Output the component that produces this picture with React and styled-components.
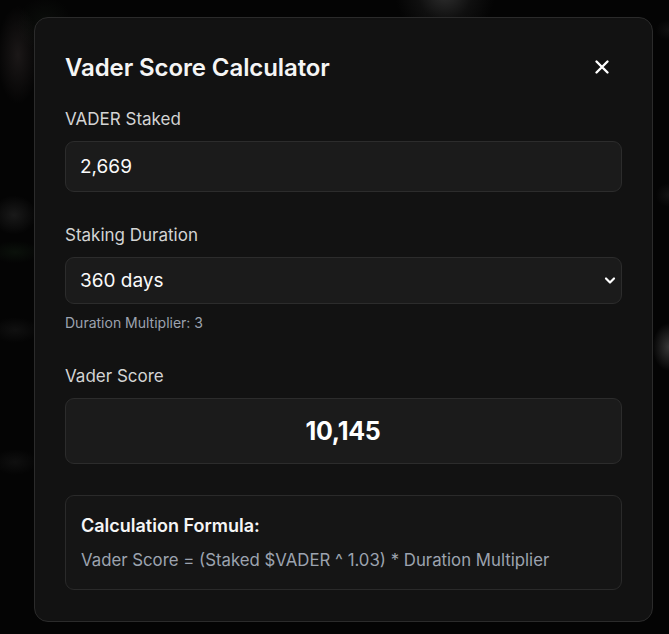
import React, { useState } from "react";
import styled, { createGlobalStyle } from "styled-components";

const GlobalStyle = createGlobalStyle`
  html, body {
    margin: 0;
    padding: 0;
    background: #030303;
    font-family: Inter, "Noto Sans", "Liberation Sans", sans-serif;
  }
  * { box-sizing: border-box; }
`;

const Backdrop = styled.div`
  width: 669px;
  height: 634px;
  overflow: hidden;
  background:
    radial-gradient(circle at 445px -8px, rgba(90, 90, 90, 0.5) 0, rgba(60, 60, 60, 0.2) 28px, transparent 50px),
    radial-gradient(ellipse 30px 70px at 18px 55px, rgba(70, 60, 60, 0.35), transparent 70%),
    radial-gradient(ellipse 40px 40px at 45px 25px, rgba(40, 55, 40, 0.2), transparent 70%),
    radial-gradient(ellipse 30px 26px at 14px 215px, rgba(75, 75, 75, 0.3), transparent 75%),
    radial-gradient(ellipse 32px 14px at 15px 252px, rgba(30, 55, 30, 0.25), transparent 80%),
    radial-gradient(ellipse 30px 16px at 15px 330px, rgba(60, 60, 60, 0.22), transparent 80%),
    radial-gradient(ellipse 28px 16px at 15px 462px, rgba(55, 55, 55, 0.22), transparent 80%),
    radial-gradient(ellipse 22px 32px at 669px 347px, rgba(95, 95, 95, 0.55), transparent 75%),
    radial-gradient(ellipse 18px 16px at 669px 195px, rgba(60, 60, 60, 0.25), transparent 75%),
    radial-gradient(ellipse 18px 14px at 669px 30px, rgba(50, 50, 50, 0.25), transparent 75%),
    #040404;
  display: flex;
  justify-content: flex-start;
  padding: 17px 0 0 34px;
`;

const Modal = styled.div`
  width: 619px;
  height: 605px;
  background: #121212;
  border: 1px solid #2b2b2b;
  border-radius: 14px;
  padding: 30px 30px 0 30px;
  display: flex;
  flex-direction: column;
`;

const Header = styled.div`
  display: flex;
  align-items: center;
  justify-content: space-between;
  height: 38px;
`;

const Title = styled.h2`
  margin: 0;
  font-size: 24px;
  font-weight: 600;
  color: #f5f5f5;
  letter-spacing: -0.1px;
`;

const CloseButton = styled.button`
  background: none;
  border: none;
  padding: 0;
  width: 22px;
  height: 22px;
  display: flex;
  align-items: center;
  justify-content: center;
  margin-right: 9px;
  cursor: pointer;
`;

const Field = styled.div`
  display: flex;
  flex-direction: column;
  margin-top: ${p => p.$top}px;
`;

const Label = styled.label`
  font-size: 17px;
  color: #d4d4d4;
  line-height: 20px;
  margin-bottom: 12px;
`;

const Box = styled.div`
  height: ${p => p.$h}px;
  background: #1b1b1b;
  border: 1px solid #2c2c2c;
  border-radius: 9px;
  display: flex;
  align-items: center;
  padding: 0 ${p => p.$pr ?? 15}px 0 14px;
  color: #fafafa;
  font-size: 19px;
  justify-content: ${p => (p.$center ? "center" : "space-between")};
`;

const Input = styled.input`
  background: transparent;
  border: none;
  outline: none;
  color: #fafafa;
  font-family: inherit;
  font-size: 19px;
  width: 100%;
  padding: 0;
`;

const Hint = styled.div`
  font-size: 14px;
  color: #9ca3af;
  margin-top: 10px;
`;

const Score = styled.div`
  font-size: 25px;
  font-weight: 700;
  color: #ffffff;
  letter-spacing: -0.3px;
`;

const FormulaCard = styled.div`
  margin-top: 31px;
  height: 95px;
  background: #151515;
  border: 1px solid #2a2a2a;
  border-radius: 9px;
  padding: 18px 16px 0 15px;
`;

const FormulaTitle = styled.div`
  font-size: 18px;
  font-weight: 600;
  color: #f5f5f5;
  line-height: 24px;
`;

const FormulaText = styled.div`
  font-size: 16.8px;
  color: #9ca3af;
  margin-top: 12px;
  line-height: 20px;
`;

const X = () => (
  <svg width="16" height="16" viewBox="0 0 16 16" fill="none">
    <path d="M2.5 2.5L13.5 13.5M13.5 2.5L2.5 13.5" stroke="#fff" strokeWidth="2.4" strokeLinecap="round" />
  </svg>
);

const Chevron = () => (
  <svg width="12" height="9" viewBox="0 0 12 9" fill="none">
    <path d="M2 2.5L6 6.5L10 2.5" stroke="#fff" strokeWidth="2.2" strokeLinecap="round" strokeLinejoin="round" />
  </svg>
);

const App = () => {
  const [staked, setStaked] = useState("2,669");

  return (
    <>
      <GlobalStyle />
      <Backdrop>
        <Modal>
          <Header>
            <Title>Vader Score Calculator</Title>
            <CloseButton aria-label="Close">
              <X />
            </CloseButton>
          </Header>

          <Field $top={23}>
            <Label>VADER Staked</Label>
            <Box $h={51}>
              <Input value={staked} onChange={e => setStaked(e.target.value)} />
            </Box>
          </Field>

          <Field $top={33}>
            <Label>Staking Duration</Label>
            <Box $h={47} $pr={5}>
              <span>360 days</span>
              <Chevron />
            </Box>
            <Hint>Duration Multiplier: 3</Hint>
          </Field>

          <Field $top={35}>
            <Label>Vader Score</Label>
            <Box $h={66} $center>
              <Score>10,145</Score>
            </Box>
          </Field>

          <FormulaCard>
            <FormulaTitle>Calculation Formula:</FormulaTitle>
            <FormulaText>Vader Score = (Staked $VADER ^ 1.03) * Duration Multiplier</FormulaText>
          </FormulaCard>
        </Modal>
      </Backdrop>
    </>
  );
};

export default App;
